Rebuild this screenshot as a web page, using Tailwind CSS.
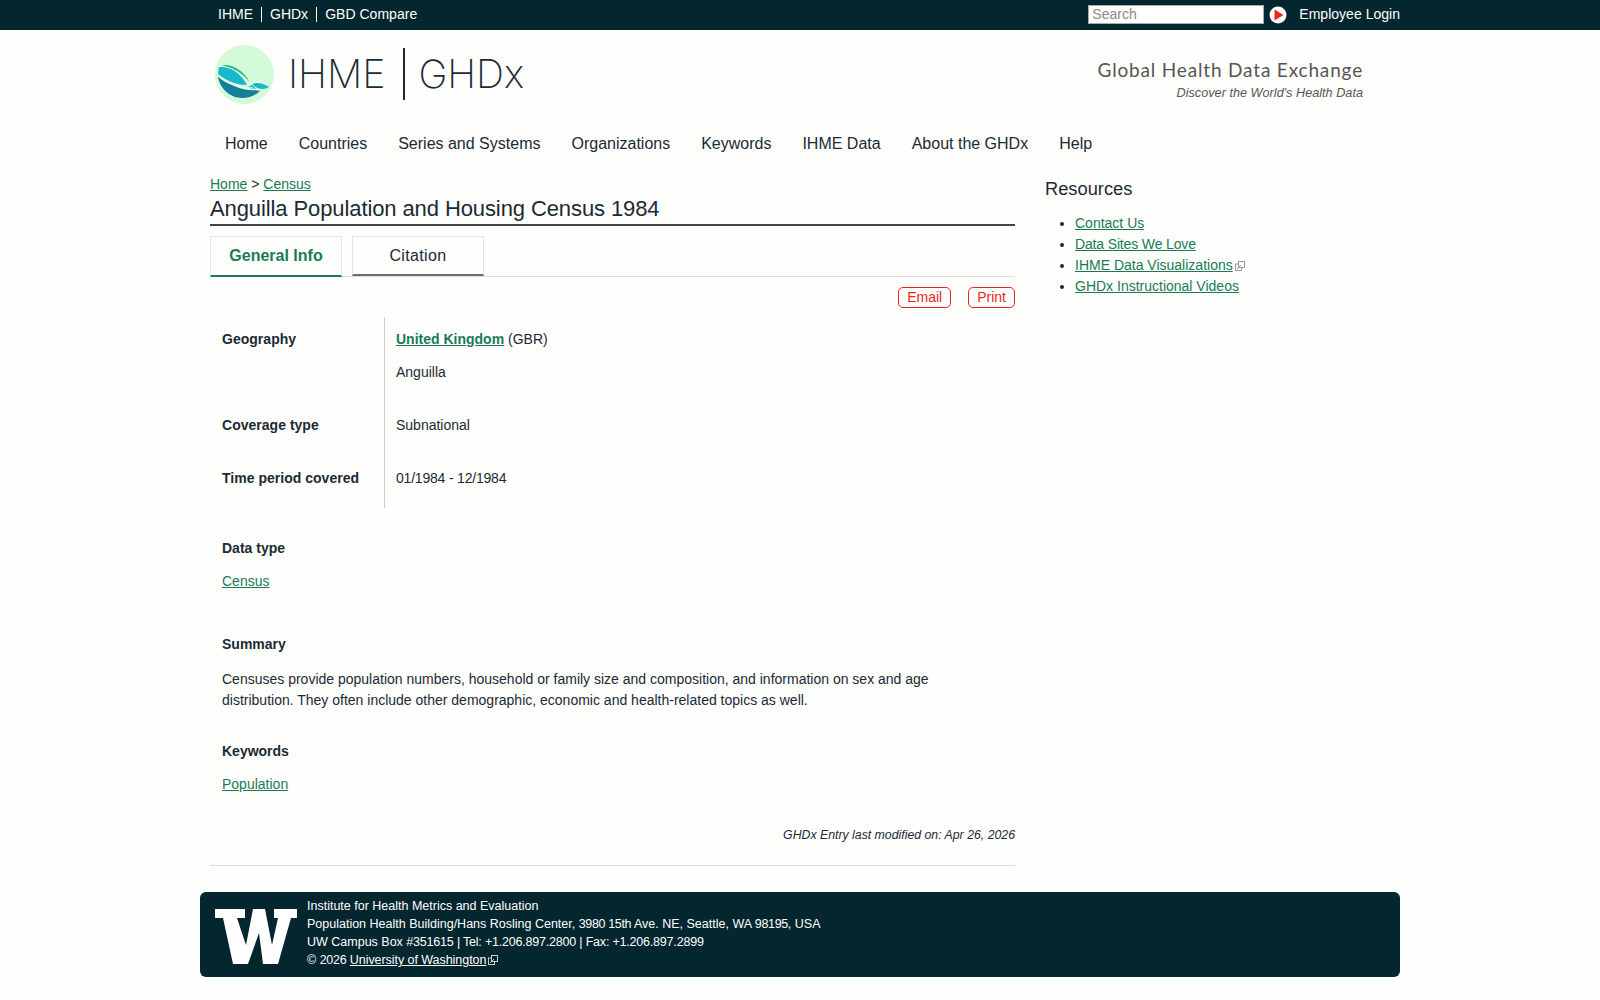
<!DOCTYPE html>
<html lang="en">
<head>
<meta charset="utf-8">
<title>Anguilla Population and Housing Census 1984 | GHDx</title>
<script src="https://cdn.jsdelivr.net/npm/@tailwindcss/browser@4"></script>
</head>
<body class="bg-[#fefefd] text-[#1b2a33] font-['Liberation_Sans',Arial,sans-serif] text-[14px]">
<div class="bg-[#03262f] h-[30px]">
  <div class="w-[1200px] mx-auto flex items-center justify-between h-full pb-[1px] text-white text-[14px]">
    <div class="flex items-center pl-[18px]">
      <a class="pr-2 leading-[15px]">IHME</a>
      <a class="px-2 leading-[15px] border-l border-white">GHDx</a>
      <a class="px-2 leading-[15px] border-l border-white tracking-[0.03px]">GBD Compare</a>
    </div>
    <div class="flex items-center">
      <div class="w-[176px] h-[19px] bg-white border border-[#aaa] text-[#8a8a8a] text-[14px] leading-[17px] pl-[3px]">Search</div>
      <svg class="ml-[5px] w-[18px] h-[18px]" viewBox="0 0 18 18"><circle cx="9" cy="9" r="8.5" fill="#fff"/><path d="M5.5 3.5 L14.5 9 L5.5 14.5 Z" fill="#e8261c"/></svg>
      <a class="ml-[12px] tracking-[0.02px]">Employee Login</a>
    </div>
  </div>
</div>
<div class="w-[1200px] mx-auto">
  <header class="flex justify-between pl-[15px] pr-[37px] h-[90px]">
    <div class="flex items-start pt-[15px]">
      <svg class="w-[59px] h-[59px]" viewBox="0 0 59 59">
        <circle cx="29.5" cy="29.5" r="29.5" fill="#d4fbd9"/>
        <path d="M3 31 C4 42 14 53 27 53 C35 53 41 50 46 45 C38 46 27 45 17 40 C11 37 6 35 3 31 Z" fill="#147f9b"/>
        <path d="M4 22 C10 21 15 23 19 25 C24 28 29 34 32 40 C24 40 12 37 3 29 Z" fill="#17b7cc"/>
        <path d="M7 20 C18 19 28 25 35 37 C30 32 24 26 19 25 C15 24 11 22 7 20 Z" fill="#27c088"/>
        <path d="M37 39 C41 37 48 38 54 42 C50 45 42 45 37 39 Z" fill="#17b7cc"/>
        <path d="M33 41 L37 40 L41 44 L37 44 Z" fill="#17b7cc"/>
        <path d="M4 21.5 C10 21 15 23 19 25 C24 28 29 34 33 39 C36 43 41 46 47 45 M3 31 C11 38 24 43 36 44 M33 41 C36 38 41 37 45 37" fill="none" stroke="#fff" stroke-width="0.9"/>
      </svg>
      <span class="ml-[14px] mt-[5px] text-[39.3px] leading-[48px] font-[250] font-['Inter',sans-serif] text-[#1b2a33]">IHME</span>
      <span class="ml-[18px] mt-[3px] w-[2px] h-[52px] bg-[#1b2a33]"></span>
      <span class="ml-[13px] mt-[5px] text-[39px] leading-[48px] font-[250] font-['Inter',sans-serif] text-[#1b2a33]">GHDx</span>
    </div>
    <div class="text-right pt-[28px]">
      <div class="font-['Lato',sans-serif] text-[19px] leading-[24px] text-[#555] tracking-[0.83px]">Global Health Data Exchange</div>
      <div class="italic text-[12.7px] leading-[18px] text-[#555] mt-[2px]">Discover the World's Health Data</div>
    </div>
  </header>
  <nav class="flex gap-[31px] pl-[25px] text-[16px] leading-[24px] h-[54px] pt-[12px]">
    <a>Home</a><a>Countries</a><a>Series and Systems</a><a>Organizations</a><a>Keywords</a><a>IHME Data</a><a>About the GHDx</a><a>Help</a>
  </nav>
  <div class="flex pl-[10px] gap-[30px]">
    <main class="w-[805px]">
      <div class="text-[14px] leading-[20px]"><a class="text-[#1a7a56] underline">Home</a> &gt; <a class="text-[#1a7a56] underline">Census</a></div>
      <h1 class="text-[22px] leading-[28px] pb-[1px] pt-[1px] border-b-2 border-[#444] tracking-[-0.1px]">Anguilla Population and Housing Census 1984</h1>
      <div class="flex gap-[10px] mt-[10px] border-b border-[#ddd] h-[41px]">
        <a class="w-[132px] h-[41px] border border-[#e5e5e5] border-b-2 border-b-[#1a7a56] text-[#1a7a56] font-bold text-[16px] flex items-center justify-center">General Info</a>
        <a class="w-[132px] h-[40px] border border-[#e5e5e5] border-b-2 border-b-[#666f73] text-[16px] tracking-[0.35px] flex items-center justify-center">Citation</a>
      </div>
      <div class="flex justify-end gap-[17px] mt-[10px]">
        <a class="border border-[#e8261c] text-[#e8261c] rounded-[5px] h-[21px] px-[8px] leading-[19px] text-[14px]">Email</a>
        <a class="border border-[#e8261c] text-[#e8261c] rounded-[5px] h-[21px] px-[8px] leading-[19px] text-[14px]">Print</a>
      </div>
      <div class="mt-[9px] grid grid-cols-[174px_1fr] w-[805px]">
        <div class="pl-[12px] pt-[12px] h-[191px] font-bold flex flex-col tracking-[0.02px]">
          <div class="leading-[20px]">Geography</div>
          <div class="leading-[20px] mt-[66px]">Coverage type</div>
          <div class="leading-[20px] mt-[33px]">Time period covered</div>
        </div>
        <div class="pl-[11px] pt-[12px] h-[191px] border-l border-[#ccc]">
          <div class="leading-[20px]"><a class="text-[#1a7a56] underline font-bold">United Kingdom</a> (GBR)</div>
          <div class="leading-[20px] mt-[13px]">Anguilla</div>
          <div class="leading-[20px] mt-[33px]">Subnational</div>
          <div class="leading-[20px] mt-[33px] tracking-[-0.2px]">01/1984 - 12/1984</div>
        </div>
      </div>
      <div class="pl-[12px]">
        <div class="font-bold leading-[20px] mt-[30px]">Data type</div>
        <div class="leading-[20px] mt-[13px]"><a class="text-[#1a7a56] underline">Census</a></div>
        <div class="font-bold leading-[20px] mt-[43px]">Summary</div>
        <p class="leading-[21px] mt-[15px] w-[740px]">Censuses provide population numbers, household or family size and composition, and information on sex and age distribution. They often include other demographic, economic and health-related topics as well.</p>
        <div class="font-bold leading-[20px] mt-[30px]">Keywords</div>
        <div class="leading-[20px] mt-[13px]"><a class="text-[#1a7a56] underline">Population</a></div>
      </div>
      <div class="text-right italic text-[12.3px] leading-[18px] mt-[32px]">GHDx Entry last modified on: Apr 26, 2026</div>
      <div class="border-b border-[#ddd] mt-[21px]"></div>
    </main>
    <aside class="w-[320px]">
      <h2 class="text-[18.3px] leading-[24px] mt-[3px]">Resources</h2>
      <ul class="list-disc pl-[30px] mt-[12px] text-[14px] leading-[21px]">
        <li><a class="text-[#1a7a56] underline">Contact Us</a></li>
        <li><a class="text-[#1a7a56] underline tracking-[-0.15px]">Data Sites We Love</a></li>
        <li><a class="text-[#1a7a56] underline">IHME Data Visualizations</a><svg class="inline-block ml-[2px] w-[10px] h-[10px] align-[-1px]" viewBox="0 0 10 10" fill="none" stroke="#999" stroke-width="1"><rect x="0.5" y="3" width="6" height="6.5"/><rect x="3.5" y="0.5" width="6" height="6" fill="#fefefd"/><path d="M2 8 L6 4"/></svg></li>
        <li><a class="text-[#1a7a56] underline">GHDx Instructional Videos</a></li>
      </ul>
    </aside>
  </div>
  <footer class="mt-[26px] h-[85px] bg-[#03262f] rounded-[6px] text-white flex text-[12.5px] leading-[18px]">
    <svg class="ml-[15px] mt-[17px] w-[82px] h-[55px] shrink-0" viewBox="0 0 82 55"><path d="M0 0H30V9H22L31 36L38 0H50L57 36L63 9H59V0H82V9H76L63 55H48L44 24L33 55H18L8 9H0Z" fill="#fff"/></svg>
    <div class="ml-[10px] pt-[5px]">
      <div>Institute for Health Metrics and Evaluation</div>
      <div>Population Health Building/Hans Rosling Center, <span class="tracking-[-0.35px]">3980 15th</span> Ave. NE, Seattle, WA <span class="tracking-[-0.35px]">98195</span>, USA</div>
      <div>UW Campus Box <span class="tracking-[-0.2px]">#351615 | Tel: +1.206.897.2800 | Fax: +1.206.897.2899</span></div>
      <div>© <span class="tracking-[-0.3px]">2026</span> <a class="underline tracking-[-0.05px]">University of Washington</a><svg class="inline-block ml-[2px] w-[10px] h-[10px] align-[-1px]" viewBox="0 0 10 10" fill="none" stroke="#ccc" stroke-width="1"><rect x="0.5" y="3" width="6" height="6.5"/><rect x="3.5" y="0.5" width="6" height="6" fill="#03262f"/><path d="M2 8 L6 4"/></svg></div>
    </div>
  </footer>
</div>
</body>
</html>
